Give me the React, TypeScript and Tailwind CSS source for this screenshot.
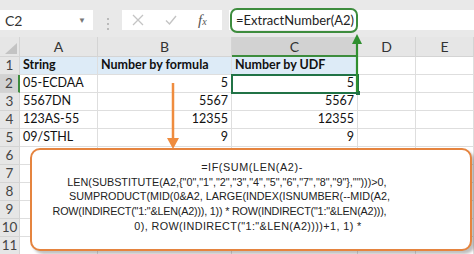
import React from "react";

// --- Data ---
const columns = [
  { key: "A", width: "w-[78px]" },
  { key: "B", width: "w-[134px]" },
  { key: "C", width: "w-[126px]" },
  { key: "D", width: "w-[58px]" },
  { key: "E", width: "w-[58px]" },
];

const rows: string[][] = [
  ["String", "Number by formula", "Number by UDF", "", ""],
  ["05-ECDAA", "5", "5", "", ""],
  ["5567DN", "5567", "5567", "", ""],
  ["123AS-55", "12355", "12355", "", ""],
  ["09/STHL", "9", "9", "", ""],
  ["", "", "", "", ""],
  ["", "", "", "", ""],
  ["", "", "", "", ""],
  ["", "", "", "", ""],
  ["", "", "", "", ""],
  ["", "", "", "", ""],
];

// lines as wrapped in the text box; shift nudges each line's centre
const formulaLines = [
  { text: "=IF(SUM(LEN(A2)-", shift: "ml-[2px] tracking-[0.6px]" },
  { text: 'LEN(SUBSTITUTE(A2,{"0","1","2","3","4","5","6","7","8","9"},"")))>0,', shift: "mr-[48px]" },
  { text: "SUMPRODUCT(MID(0&A2, LARGE(INDEX(ISNUMBER(--MID(A2,", shift: "mr-[43px]" },
  { text: 'ROW(INDIRECT("1:"&LEN(A2))), 1)) * ROW(INDIRECT("1:"&LEN(A2))),', shift: "mr-[63px] tracking-[-0.2px]" },
  { text: '0), ROW(INDIRECT("1:"&LEN(A2))))+1, 1) *', shift: "mr-[6px] tracking-[0.4px]" },
];

// --- Components ---

const Toolbar = () => (
  <div className="flex h-[37px] bg-[#e9e9e9] pt-[10px]">
    {/* Name box */}
    <div className="flex h-[20px] w-[93px] items-center justify-between bg-white pl-[5px] pr-[7px] text-[14px] text-[#333]">
      <span>C2</span>
      <span className="text-[8px] text-[#777]">▼</span>
    </div>
    {/* Separator dots */}
    <div className="flex w-[29px] flex-col items-center justify-center gap-[3px]">
      <span className="h-[2px] w-[2px] rounded-full bg-[#aaa]" />
      <span className="h-[2px] w-[2px] rounded-full bg-[#aaa]" />
      <span className="h-[2px] w-[2px] rounded-full bg-[#aaa]" />
    </div>
    {/* Cancel / enter / fx */}
    <div className="flex h-[20px] w-[100px] items-center bg-white">
      <svg width="12" height="12" viewBox="0 0 12 12" className="ml-[10px]">
        <path d="M1 1 L11 11 M11 1 L1 11" stroke="#c4c4c4" strokeWidth="1.3" />
      </svg>
      <svg width="12" height="12" viewBox="0 0 12 12" className="ml-[21px]">
        <path d="M1 6.5 L4.5 10 L11 2" stroke="#c4c4c4" strokeWidth="1.4" fill="none" />
      </svg>
      <span className="ml-[21px] font-['Liberation_Serif',serif] text-[15px] italic text-[#555]">
        f<span className="text-[10px]">x</span>
      </span>
    </div>
    {/* Formula input */}
    <div className="relative ml-[7px] h-[20px] flex-1 bg-white">
      <div className="absolute left-[1px] top-[-2px] flex h-[25px] w-[128px] items-center rounded-[7px] border-2 border-[#3d8c3d] pl-[4px] text-[13px] text-[#222]">
        =ExtractNumber(A2)
      </div>
    </div>
  </div>
);

const HeaderRow = () => (
  <div className="flex h-[20px] bg-[#e6e6e6]">
    <div className="relative w-[20px] border-r border-b border-[#d4d4d4]">
      <svg width="12" height="11" viewBox="0 0 12 11" className="absolute bottom-[2px] right-[2px]">
        <path d="M12 0 L12 11 L0 11 Z" fill="#c3c3c3" />
      </svg>
    </div>
    {columns.map((c) => (
      <div
        key={c.key}
        className={`${c.width} flex items-center justify-center border-r border-[#d4d4d4] text-[14px] text-[#333] ${
          c.key === "C" ? "border-b-2 border-b-[#3d8c3d] bg-[#d2d2d2]" : "border-b"
        }`}
      >
        {c.key}
      </div>
    ))}
  </div>
);

const DataRow = ({ cells, index }: { cells: string[]; index: number }) => (
  <div className="flex h-[18px]">
    <div
      className={`flex w-[20px] items-center justify-center border-b border-[#d4d4d4] text-[13.5px] text-[#444] ${
        index === 1 ? "border-r-2 border-r-[#3d8c3d] bg-[#d2d2d2]" : "border-r bg-[#e6e6e6]"
      }`}
    >
      {index + 1}
    </div>
    {columns.map((c, ci) => {
      const isHeader = index === 0 && ci < 3;
      const numeric = ci === 1 || ci === 2;
      return (
        <div
          key={c.key}
          className={`${c.width} flex items-center overflow-hidden whitespace-nowrap border-r border-b border-[#dedede] px-[3px] text-[12.5px] text-[#111] ${
            isHeader ? "bg-[#ddebf7] font-bold" : "bg-white"
          } ${numeric && index > 0 ? "justify-end" : "justify-start"}`}
        >
          {cells[ci]}
        </div>
      );
    })}
  </div>
);

export default function App() {
  return (
    <div className="relative h-[254px] w-[474px] overflow-hidden bg-white font-['Lato',sans-serif]">
      <Toolbar />
      <HeaderRow />
      {rows.map((cells, i) => (
        <DataRow key={i} cells={cells} index={i} />
      ))}

      {/* Selected cell C2 */}
      <div className="pointer-events-none absolute left-[231px] top-[74px] h-[20px] w-[128px] border-2 border-[#217346]">
        <div className="absolute -bottom-[3px] -right-[3px] h-[4px] w-[4px] bg-[#217346]" />
      </div>

      {/* Arrows */}
      <svg className="pointer-events-none absolute left-0 top-0" width="474" height="254">
        <path d="M357 92 L357 42" stroke="#2f8f2f" strokeWidth="2.2" />
        <path d="M352 44 L357 34 L362 44 Z" fill="#2f8f2f" />
        <path d="M173 83 L173 140" stroke="#ef8c3f" strokeWidth="2.5" />
        <path d="M167 138 L173 149 L179 138 Z" fill="#ef8c3f" />
      </svg>

      {/* Callout */}
      <div className="absolute left-[30px] top-[148px] flex h-[103px] w-[442px] flex-col items-center rounded-[10px] border-2 border-[#e5843f] bg-white pt-[10px] font-['Liberation_Sans',Arial,sans-serif] text-[10.8px] leading-[14.7px] text-[#222] shadow-[3px_3px_3px_rgba(0,0,0,0.25)]">
        {formulaLines.map((l, i) => (
          <div key={i} className={`whitespace-pre ${l.shift}`}>
            {l.text}
          </div>
        ))}
      </div>
    </div>
  );
}
